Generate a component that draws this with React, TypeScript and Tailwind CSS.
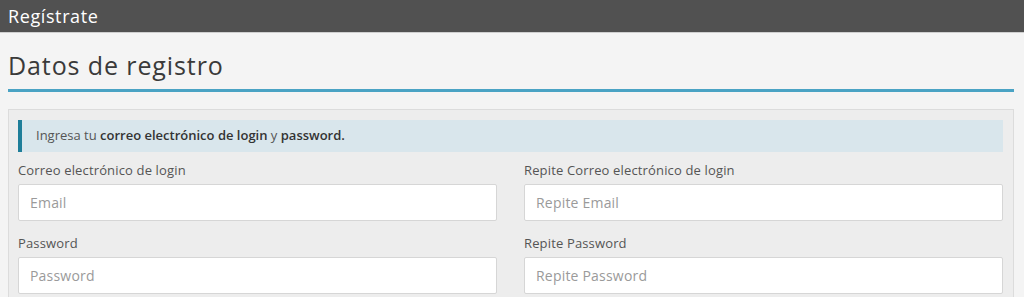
import React from 'react';

const font = { fontFamily: '"Open Sans", "Liberation Sans", sans-serif' };

interface FieldProps {
    label: string;
    placeholder: string;
    type?: string;
}

const Field: React.FC<FieldProps> = ({ label, placeholder, type = 'text' }) => (
    <div className="mb-[12px]">
        <label className="block text-[13px] leading-[20px] tracking-[0.15px] text-[#555] mb-[4px]">{label}</label>
        <input
            type={type}
            placeholder={placeholder}
            className="block w-full h-[37px] bg-white border border-[#d6d6d6] rounded-[2px] px-[11px] text-[14px] tracking-[0.2px] text-[#333] placeholder:text-[#9a9a9a] outline-none"
        />
    </div>
);

export default function App() {
    return (
        <div className="min-h-[297px] bg-[#f4f4f4]" style={font}>
            {/* Barra superior */}
            <div className="h-[33px] bg-[#515151] border-b border-[#cfcfcf] px-[8px] flex items-center">
                <span className="text-[18px] tracking-[0.6px] text-white leading-none">Regístrate</span>
            </div>

            <div className="px-[8px] pr-[10px]">
                {/* Título */}
                <h1 className="pt-[17px] pb-[8px] text-[25px] leading-[31px] tracking-[0.9px] text-[#3a3a3a] border-b-[3px] border-[#4aa3c4]">
                    Datos de registro
                </h1>

                {/* Panel */}
                <div className="mt-[17px] bg-[#ededed] border border-[#dcdcdc] px-[9px] pt-[10px] pr-[10px]">
                    <div className="h-[32px] flex items-center bg-[#d9e6ec] border-l-[4px] border-[#1f7e99] pl-[14px] mb-[8px] text-[13px] text-[#555]">
                        <span>
                            Ingresa tu <span className="text-[#333] font-semibold">correo electrónico de login</span> y{' '}
                            <span className="text-[#333] font-semibold">password.</span>
                        </span>
                    </div>

                    <div className="grid grid-cols-2 gap-x-[27px]">
                        <Field label="Correo electrónico de login" placeholder="Email" />
                        <Field label="Repite Correo electrónico de login" placeholder="Repite Email" />
                        <Field label="Password" placeholder="Password" type="password" />
                        <Field label="Repite Password" placeholder="Repite Password" type="password" />
                    </div>
                </div>
            </div>
        </div>
    );
}
